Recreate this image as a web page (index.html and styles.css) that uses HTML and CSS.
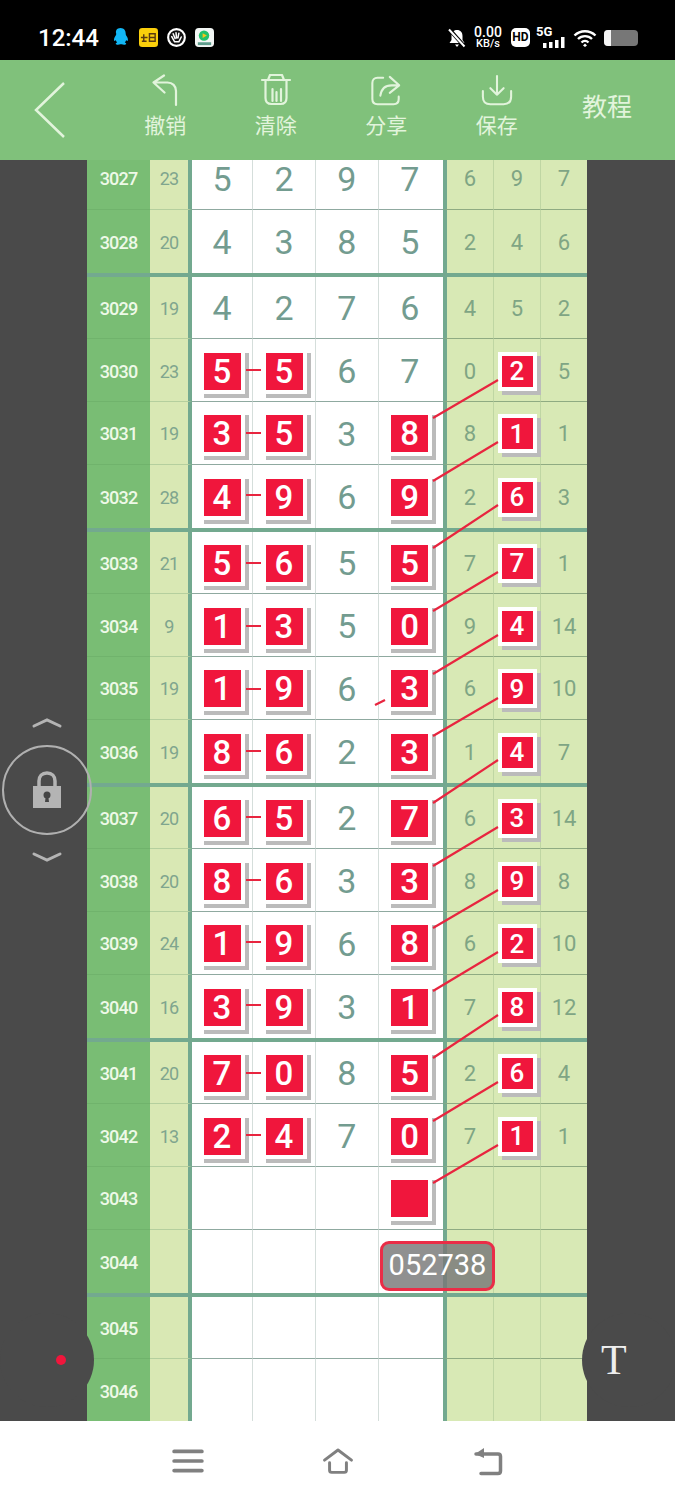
FILE: index.html
```html
<!DOCTYPE html>
<html lang="zh-CN">
<head>
<meta charset="UTF-8">
<meta name="viewport" content="width=device-width, initial-scale=1.0">
<title>排列三走势图</title>
<link rel="stylesheet" href="styles.css">
</head>
<body>
<div class="status">
  <span class="time">12:44</span>
  <div class="apps">
    <svg class="app" viewBox="0 0 20 20"><path d="M10 0c4 0 5.500 3 5.500 6 0 1 .3 1.600 1.200 3 1.100 1.800 1.500 4 .8 4.500-.4.300-1.100-.2-1.500-.9-.2 1-.7 1.900-1.500 2.600 1.100.4 1.800 1 1.500 1.700-.3.900-3.300 1-4.700.3H9.700c-1.400.7-4.400.6-4.700-.3-.3-.7.400-1.300 1.500-1.700-.8-.7-1.300-1.600-1.500-2.600-.4.700-1.100 1.200-1.500.9-.7-.5-.3-2.700.8-4.500.9-1.400 1.200-2 1.200-3C4.500 3 6 0 10 0z" fill="#12b7f5"/></svg>
    <svg class="app" viewBox="0 0 20 20"><rect width="20" height="20" rx="3.500" fill="#fbcf0b"/><path d="M2 10h7M5 6.500v7M3 14h5M11 6h6v8h-6zM11 10h6" stroke="#5a3a10" stroke-width="1.500" fill="none"/></svg>
    <svg class="app" viewBox="0 0 20 20"><circle cx="10" cy="10" r="8.800" fill="#111" stroke="#fff" stroke-width="2.200"/><path d="M5 9l3 5.500h4.500l2.500-5M6.500 6l2 5M9.500 5l.5 5.500M12.500 5.500l-1 5" stroke="#fff" stroke-width="1.600" fill="none" stroke-linecap="round"/></svg>
    <svg class="app" viewBox="0 0 20 20"><rect width="20" height="20" rx="4" fill="#f2f6f4"/><circle cx="9.500" cy="8" r="5.500" fill="#23c26b"/><path d="M8 5.500l4.500 2.500-4.500 2.500z" fill="#fcc419"/><path d="M3 15h14v3H3z" fill="#5e9c8c"/></svg>
  </div>
  <div class="indicators">
    <svg class="mute" viewBox="0 0 20 20"><path d="M10 2c3.500 0 5.500 2.500 5.500 6v4l2 3h-15l2-3V8c0-3.500 2-6 5.500-6zM8 16.500h4l-2 2.500z" fill="#fff"/><path d="M2.500 1.500l15 17" stroke="#000" stroke-width="4"/><path d="M2 1.500l15.500 17" stroke="#fff" stroke-width="2"/></svg>
    <div class="speed"><b>0.00</b><b class="unit">KB/s</b></div>
    <span class="hd">HD</span>
    <div class="signal">
      <span class="fiveg">5G</span>
      <svg class="bars" viewBox="0 0 22 11"><path d="M0 6h3.500v5H0zM6 5h3.500v6H6zM12 3h3.500v8H12zM18 0h3.500v11H18z" fill="#fff"/></svg>
    </div>
    <svg class="wifi" viewBox="0 0 24 18"><path d="M1.500 6.500a15 15 0 0 1 21 0M5 10a10 10 0 0 1 14 0M8.500 13.500a5 5 0 0 1 7 0" stroke="#fff" stroke-width="2.400" fill="none"/><path d="M12 14.500l2 2-2 1.500-2-1.500z" fill="#fff"/></svg>
    <div class="battery"><i class="charge"></i></div>
  </div>
</div>

<div class="toolbar">
  <button class="back">
    <svg viewBox="0 0 34 58"><path d="M31 2L3 29l28 27" stroke="#e2f4dc" stroke-width="2.500" fill="none"/></svg>
  </button>
  <div class="tools">
    <div class="tool">
      <svg viewBox="0 0 32 34"><path d="M15 1.500L4.500 8.500l11 10M4.500 8.500h14c5 0 8.500 3.500 8.500 8.500V31" stroke="#e2f4dc" stroke-width="2.200" fill="none" stroke-linecap="round" stroke-linejoin="round"/></svg>
      <span>撤销</span>
    </div>
    <div class="tool">
      <svg viewBox="0 0 32 34"><path d="M2 6h28M8 6l2-5h12l2 5M5.500 6v18c0 4 2 6 6 6h9c4 0 6-2 6-6V6M12.500 15v12M16.500 18v9M21 15v12" stroke="#e2f4dc" stroke-width="2.200" fill="none" stroke-linecap="round" stroke-linejoin="round"/></svg>
      <span>清除</span>
    </div>
    <div class="tool">
      <svg viewBox="0 0 34 34"><path d="M14 3H8C4.500 3 2.500 5 2.500 8.500v17C2.500 29 4.500 31 8 31h17c3.500 0 5.500-2 5.500-5.500V23" stroke="#e2f4dc" stroke-width="2.200" fill="none" stroke-linecap="round"/><path d="M21 2l10 9-10 8M31 11h-8c-7 0-11 4-12 11" stroke="#e2f4dc" stroke-width="2.200" fill="none" stroke-linecap="round" stroke-linejoin="round"/></svg>
      <span>分享</span>
    </div>
    <div class="tool">
      <svg viewBox="0 0 34 34"><path d="M17 1v20M10 14l7 7 7-7M2 17v6c0 5 3 8 8 8h14c5 0 8-3 8-8v-6" stroke="#e2f4dc" stroke-width="2.200" fill="none" stroke-linecap="round" stroke-linejoin="round"/></svg>
      <span>保存</span>
    </div>
  </div>
  <span class="help">教程</span>
</div>

<div class="chart">
  <i class="bump left"></i>
  <i class="bump right"></i>
  <div class="sheet">
    <div class="group">
      <div class="row"><b class="id">3027</b><span class="sum">23</span><span class="d">5</span><span class="d">2</span><span class="d">9</span><span class="d">7</span><span class="r">6</span><span class="r">9</span><span class="r">7</span></div>
      <div class="row"><b class="id">3028</b><span class="sum">20</span><span class="d">4</span><span class="d">3</span><span class="d">8</span><span class="d">5</span><span class="r">2</span><span class="r">4</span><span class="r">6</span></div>
    </div>
    <div class="group">
      <div class="row"><b class="id">3029</b><span class="sum">19</span><span class="d">4</span><span class="d">2</span><span class="d">7</span><span class="d">6</span><span class="r">4</span><span class="r">5</span><span class="r">2</span></div>
      <div class="row"><b class="id">3030</b><span class="sum">23</span><span class="d"><i class="ball">5</i></span><span class="d"><i class="ball">5</i></span><span class="d">6</span><span class="d">7</span><span class="r">0</span><span class="r"><i class="ball small">2</i></span><span class="r">5</span></div>
      <div class="row"><b class="id">3031</b><span class="sum">19</span><span class="d"><i class="ball">3</i></span><span class="d"><i class="ball">5</i></span><span class="d">3</span><span class="d"><i class="ball">8</i></span><span class="r">8</span><span class="r"><i class="ball small">1</i></span><span class="r">1</span></div>
      <div class="row"><b class="id">3032</b><span class="sum">28</span><span class="d"><i class="ball">4</i></span><span class="d"><i class="ball">9</i></span><span class="d">6</span><span class="d"><i class="ball">9</i></span><span class="r">2</span><span class="r"><i class="ball small">6</i></span><span class="r">3</span></div>
    </div>
    <div class="group">
      <div class="row"><b class="id">3033</b><span class="sum">21</span><span class="d"><i class="ball">5</i></span><span class="d"><i class="ball">6</i></span><span class="d">5</span><span class="d"><i class="ball">5</i></span><span class="r">7</span><span class="r"><i class="ball small">7</i></span><span class="r">1</span></div>
      <div class="row"><b class="id">3034</b><span class="sum">9</span><span class="d"><i class="ball">1</i></span><span class="d"><i class="ball">3</i></span><span class="d">5</span><span class="d"><i class="ball">0</i></span><span class="r">9</span><span class="r"><i class="ball small">4</i></span><span class="r">14</span></div>
      <div class="row"><b class="id">3035</b><span class="sum">19</span><span class="d"><i class="ball">1</i></span><span class="d"><i class="ball">9</i></span><span class="d">6</span><span class="d"><i class="ball">3</i></span><span class="r">6</span><span class="r"><i class="ball small">9</i></span><span class="r">10</span></div>
      <div class="row"><b class="id">3036</b><span class="sum">19</span><span class="d"><i class="ball">8</i></span><span class="d"><i class="ball">6</i></span><span class="d">2</span><span class="d"><i class="ball">3</i></span><span class="r">1</span><span class="r"><i class="ball small">4</i></span><span class="r">7</span></div>
    </div>
    <div class="group">
      <div class="row"><b class="id">3037</b><span class="sum">20</span><span class="d"><i class="ball">6</i></span><span class="d"><i class="ball">5</i></span><span class="d">2</span><span class="d"><i class="ball">7</i></span><span class="r">6</span><span class="r"><i class="ball small">3</i></span><span class="r">14</span></div>
      <div class="row"><b class="id">3038</b><span class="sum">20</span><span class="d"><i class="ball">8</i></span><span class="d"><i class="ball">6</i></span><span class="d">3</span><span class="d"><i class="ball">3</i></span><span class="r">8</span><span class="r"><i class="ball small">9</i></span><span class="r">8</span></div>
      <div class="row"><b class="id">3039</b><span class="sum">24</span><span class="d"><i class="ball">1</i></span><span class="d"><i class="ball">9</i></span><span class="d">6</span><span class="d"><i class="ball">8</i></span><span class="r">6</span><span class="r"><i class="ball small">2</i></span><span class="r">10</span></div>
      <div class="row"><b class="id">3040</b><span class="sum">16</span><span class="d"><i class="ball">3</i></span><span class="d"><i class="ball">9</i></span><span class="d">3</span><span class="d"><i class="ball">1</i></span><span class="r">7</span><span class="r"><i class="ball small">8</i></span><span class="r">12</span></div>
    </div>
    <div class="group">
      <div class="row"><b class="id">3041</b><span class="sum">20</span><span class="d"><i class="ball">7</i></span><span class="d"><i class="ball">0</i></span><span class="d">8</span><span class="d"><i class="ball">5</i></span><span class="r">2</span><span class="r"><i class="ball small">6</i></span><span class="r">4</span></div>
      <div class="row"><b class="id">3042</b><span class="sum">13</span><span class="d"><i class="ball">2</i></span><span class="d"><i class="ball">4</i></span><span class="d">7</span><span class="d"><i class="ball">0</i></span><span class="r">7</span><span class="r"><i class="ball small">1</i></span><span class="r">1</span></div>
      <div class="row"><b class="id">3043</b><span class="sum"></span><span class="d"></span><span class="d"></span><span class="d"></span><span class="d"><i class="ball"></i></span><span class="r"></span><span class="r"></span><span class="r"></span></div>
      <div class="row"><b class="id">3044</b><span class="sum"></span><span class="d"></span><span class="d"></span><span class="d"></span><span class="d"></span><span class="r"></span><span class="r"></span><span class="r"></span></div>
    </div>
    <div class="group">
      <div class="row"><b class="id">3045</b><span class="sum"></span><span class="d"></span><span class="d"></span><span class="d"></span><span class="d"></span><span class="r"></span><span class="r"></span><span class="r"></span></div>
      <div class="row"><b class="id">3046</b><span class="sum"></span><span class="d"></span><span class="d"></span><span class="d"></span><span class="d"></span><span class="r"></span><span class="r"></span><span class="r"></span></div>
    </div>

    <!-- trend lines, in screen coordinates -->
    <svg class="links" viewBox="0 0 675 1500">
      <path d="M246 370h15M246 433h15M246 495h15M246 563h15M246 626h15M246 689h15M246 751h15M246 817h15M246 880h15M246 942h15M246 1005h15M246 1073h15M246 1135h15"/>
      <path d="M433 418L498 380M433 481L498 442M433 548L498 505M433 611L498 572M433 674L498 635M433 736L498 698M433 803L498 760M433 866L498 827M433 928L498 890M433 991L498 952M433 1058L498 1015M433 1121L498 1082M433 1183L498 1145"/>
      <path d="M375 705L385 700"/>
    </svg>
    <div class="popup">052738</div>
  </div>

  <div class="lock">
    <svg class="chev" viewBox="0 0 30 12"><path d="M2 9l13-6 13 6" stroke="#b4b4b4" stroke-width="3" fill="none" stroke-linecap="round"/></svg>
    <div class="ring">
      <svg viewBox="0 0 30 38"><path d="M7 17V10C7 5 10 2 15 2s8 3 8 8v7" stroke="#b4b4b4" stroke-width="3.500" fill="none"/><rect x="1" y="15" width="28" height="22" fill="#b4b4b4"/><circle cx="15" cy="24" r="3.500" fill="#444"/><path d="M13.800 25h2.400l.8 6h-4z" fill="#444"/></svg>
    </div>
    <svg class="chev" viewBox="0 0 30 12"><path d="M2 3l13 6 13-6" stroke="#b4b4b4" stroke-width="3" fill="none" stroke-linecap="round"/></svg>
  </div>
  <i class="dot"></i>
  <span class="text-tool">T</span>
</div>

<div class="nav">
  <svg viewBox="0 0 30 26"><path d="M2 4h26M2 13h26M2 22h26" stroke="#808080" stroke-width="3.500" stroke-linecap="round"/></svg>
  <svg viewBox="0 0 38 30"><path d="M3 14L19 2l16 12M9 17v9c0 1.500 1 2.500 2.500 2.500h15c1.500 0 2.500-1 2.500-2.500v-9" stroke="#808080" stroke-width="3.500" fill="none" stroke-linecap="round" stroke-linejoin="round"/></svg>
  <svg viewBox="0 0 30 30"><path d="M3 8h22c1.500 0 2.500 1 2.500 2.500V25c0 1.500-1 2.500-2.500 2.500H8" stroke="#808080" stroke-width="3.500" fill="none" stroke-linecap="round"/><path d="M11 2L2 8l9 4z" fill="#808080"/></svg>
</div>
</body>
</html>
```

FILE: styles.css
```css
* {
  box-sizing: border-box;
}

body {
  margin: 0;
  width: 675px;
  height: 1500px;
  overflow: hidden;
  font-family: Roboto, "Noto Sans CJK SC", sans-serif;
  background-color: #fff;
}

/* status bar */
.status {
  height: 60px;
  background-color: #000;
  color: #fff;
  display: flex;
  align-items: center;
  padding: 15px 37px 0 38px;
}
.time {
  font-size: 24px;
  font-weight: 500;
}
.apps {
  display: flex;
  gap: 9px;
  margin-left: 12px;
}
.app {
  width: 19px;
  height: 19px;
}
.indicators {
  margin-left: auto;
  display: flex;
  align-items: center;
}
.mute {
  width: 20px;
  height: 20px;
}
.speed {
  display: flex;
  flex-direction: column;
  align-items: center;
  margin-left: 5px;
  width: 32px;
  line-height: 11px;
}
.speed b {
  font-size: 14px;
  font-weight: 500;
}
.speed .unit {
  font-size: 11px;
}
.hd {
  margin-left: 7px;
  width: 19px;
  height: 19px;
  border-radius: 5px;
  background-color: #fff;
  color: #000;
  font-size: 12px;
  font-weight: 700;
  text-align: center;
  line-height: 19px;
}
.signal {
  margin-left: 6px;
  width: 30px;
  height: 21px;
  display: flex;
  flex-direction: column;
  justify-content: space-between;
}
.fiveg {
  font-size: 13px;
  font-weight: 700;
  line-height: 10px;
}
.bars {
  width: 22px;
  height: 11px;
  margin: -2px 0 0 7px;
}
.wifi {
  width: 24px;
  height: 18px;
  margin-left: 7px;
}
.battery {
  margin-left: 7px;
  width: 34px;
  height: 16px;
  border-radius: 4px;
  background-color: #777;
  overflow: hidden;
}
.charge {
  display: block;
  width: 7px;
  height: 16px;
  background-color: #f4f4f4;
}

/* green toolbar */
.toolbar {
  height: 100px;
  background-color: #80c17b;
  color: #e2f4dc;
  display: flex;
  align-items: center;
}
.back {
  width: 34px;
  height: 58px;
  margin: 0 0 0 33px;
  padding: 0;
  border: none;
  background: none;
}
.tools {
  display: flex;
  margin: -8px 0 0 43px;
}
.tool {
  width: 110.500px;
  display: flex;
  flex-direction: column;
  align-items: center;
  font-size: 21px;
  line-height: 26px;
}
.tool svg {
  width: 32px;
  height: 34px;
  margin-bottom: 5px;
}
.help {
  margin-left: auto;
  margin-right: 43px;
  font-size: 25px;
  white-space: nowrap;
  padding-bottom: 11px;
}

/* chart */
.chart {
  position: relative;
  height: 1261px;
  overflow: hidden;
  background-color: #4a4a4a;
}
.sheet {
  position: relative;
  width: 500px;
  margin: -13px 0 0 87px;
}
.group {
  border-bottom: 4px solid #73a98f;
}
.row {
  display: grid;
  grid-template-columns: 63px 42px 61px 63px 62.500px 64.500px 51px 47px 46px;
  height: 62.750px;
}
.row > * {
  display: flex;
  align-items: center;
  justify-content: center;
  padding-top: 2px;
  border-bottom: 1px solid #8fa9a0;
}
.row:last-child > * {
  border-bottom: none;
}
.id {
  background-color: #79bd74;
  color: #eef9e8;
  font-size: 18px;
  font-weight: 500;
  letter-spacing: -0.8px;
  border-bottom-color: #70b36c !important;
}
.sum {
  background-color: #d9e8b4;
  border-right: 4px solid #73a98f;
  color: #7fa58e;
  font-size: 18px;
  letter-spacing: -0.8px;
  border-bottom-color: #b5cf9e !important;
}
.d {
  background-color: #fff;
  border-right: 1px solid #d5dedb;
  color: #739c90;
  font-size: 34px;
}
.d:nth-child(6) {
  border-right: none;
  padding-right: 2px;
}
.r {
  background-color: #d8e9b5;
  border-right: 1px solid #bfd6a3;
  color: #7fa584;
  font-size: 22px;
  border-bottom-color: #8fab82;
}
.r:nth-child(7) {
  border-left: 4px solid #73a98f;
}
.r:last-child {
  border-right: none;
}
.ball {
  display: flex;
  align-items: center;
  justify-content: center;
  width: 37px;
  height: 37px;
  background-color: #f0163c;
  color: #fff;
  font-size: 33px;
  font-weight: 500;
  font-style: normal;
  box-shadow: 0 0 0 4px #fff, 4px 4px 0 4px #bbb;
}
.ball.small {
  width: 31px;
  height: 31px;
  font-size: 26px;
}
.links {
  position: absolute;
  left: -87px;
  top: -147px;
  width: 675px;
  height: 1500px;
  fill: none;
  stroke: #e8253f;
  stroke-width: 2.200px;
  pointer-events: none;
}
.popup {
  position: absolute;
  left: 293px;
  top: 1094px;
  width: 115px;
  height: 50px;
  border: 3px solid #ea2d47;
  border-radius: 9px;
  background-color: rgba(120, 120, 120, 0.82);
  color: #fff;
  font-size: 29px;
  text-align: center;
  line-height: 43px;
}

/* floating controls on the dark sides */
.lock {
  position: absolute;
  left: 2px;
  top: 557px;
  width: 90px;
  display: flex;
  flex-direction: column;
  align-items: center;
}
.chev {
  width: 30px;
  height: 12px;
}
.ring {
  width: 90px;
  height: 90px;
  margin: 16px 0;
  border: 2px solid #b0b0b0;
  border-radius: 50%;
  display: flex;
  align-items: center;
  justify-content: center;
}
.ring svg {
  width: 30px;
  height: 38px;
}
.bump {
  position: absolute;
  z-index: 1;
  top: 1153px;
  width: 94px;
  height: 94px;
  background-color: #4a4a4a;
  border-radius: 50%;
}
.bump.left {
  left: 0;
}
.bump.right {
  left: 582px;
}
.dot {
  position: absolute;
  z-index: 2;
  left: 56px;
  top: 1195px;
  width: 10px;
  height: 10px;
  border-radius: 50%;
  background-color: #f0163c;
}
.text-tool {
  position: absolute;
  z-index: 2;
  left: 601px;
  top: 1176px;
  color: #eee;
  font-family: "Liberation Serif", serif;
  font-size: 42px;
  line-height: 48px;
}

/* android nav */
.nav {
  height: 79px;
  background-color: #fff;
  display: flex;
  align-items: center;
  justify-content: space-between;
  padding: 0 171px 0 172px;
}
.nav svg {
  width: 32px;
  height: 30px;
}
```
